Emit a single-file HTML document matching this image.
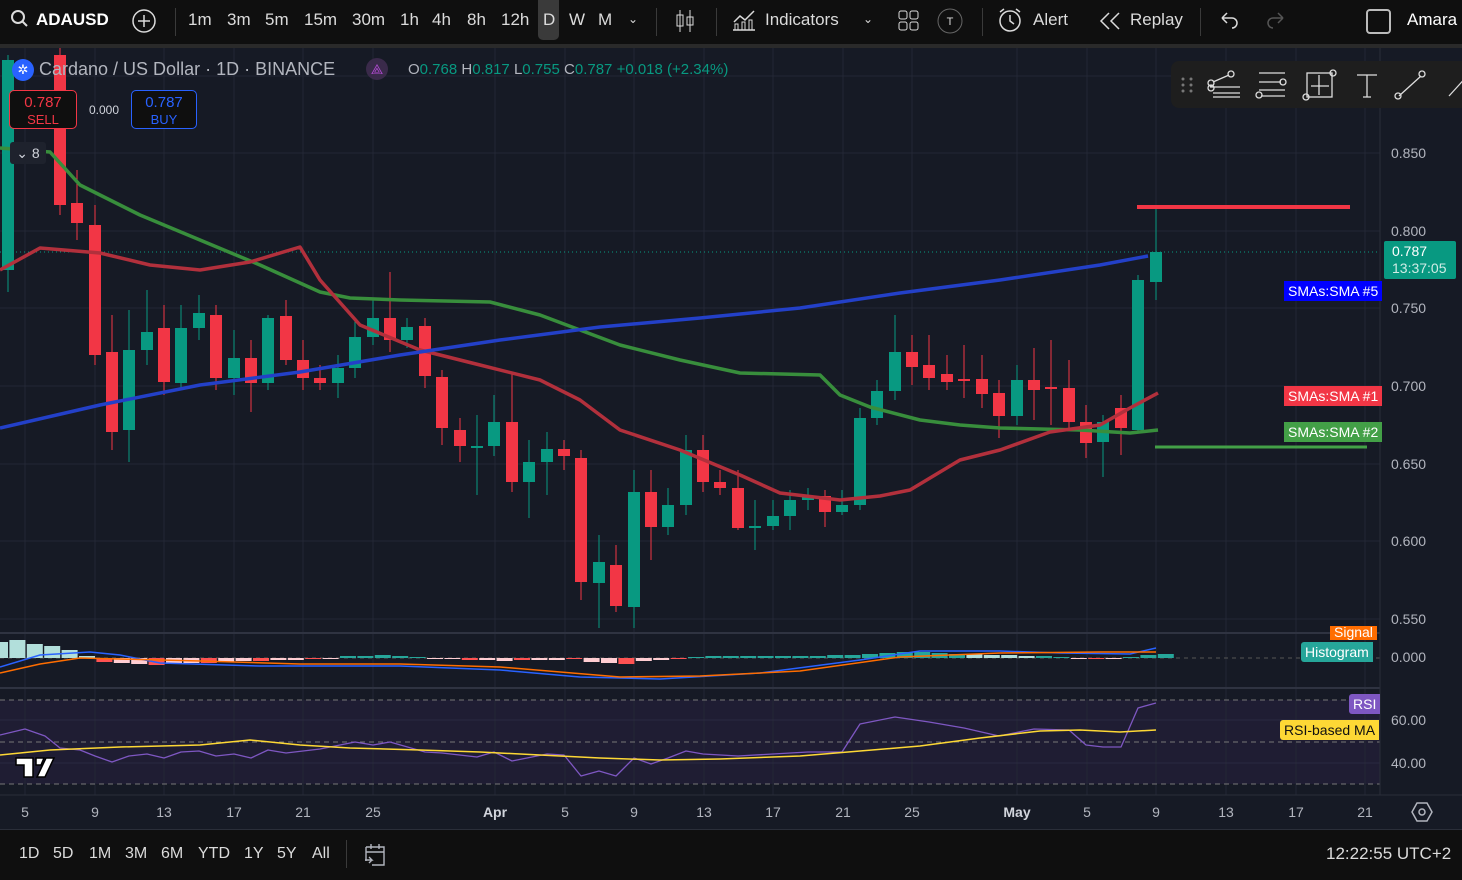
<!DOCTYPE html><html><head><meta charset="utf-8"><style>
body{margin:0;width:1462px;height:879px;overflow:hidden;background:#161a25;font-family:"Liberation Sans",sans-serif;position:relative}
.top{position:absolute;left:0;top:0;width:1462px;height:44px;background:#0f0f0f;color:#dbdbdb;font-size:17px}
.top span{position:absolute;top:10px}
.sep{position:absolute;top:0;left:0;width:1462px;height:48px;border-bottom:4px solid #2a2a2a;box-sizing:border-box;pointer-events:none}
.bot{position:absolute;left:0;top:829px;width:1462px;height:50px;background:#0f0f0f;color:#dbdbdb;font-size:16px;border-top:1px solid #2a2e39}
.bot span{position:absolute;top:15px}
.vl{position:absolute;width:1px;background:#3a3a3a}
svg{position:absolute;left:0;top:0}
.lbl{position:absolute;color:#fff;font-size:14px;padding:1px 4px;line-height:18px}
.ax{position:absolute;left:1391px;color:#b2b5be;font-size:14px}
</style></head><body>
<svg id="s" width="1462" height="879"></svg>
<div class="top">
<span style="left:10px;top:9px"><svg width="20" height="20" style="position:static"><circle cx="8" cy="8" r="6" fill="none" stroke="#dbdbdb" stroke-width="2"/><line x1="12" y1="12" x2="17" y2="17" stroke="#dbdbdb" stroke-width="2"/></svg></span>
<span style="left:36px;font-weight:bold;color:#fff">ADAUSD</span>
<span style="left:131px;top:8px"><svg width="26" height="26" style="position:static"><circle cx="13" cy="13" r="11" fill="none" stroke="#dbdbdb" stroke-width="1.5"/><path d="M13 7v12M7 13h12" stroke="#dbdbdb" stroke-width="1.5"/></svg></span>
<div class="vl" style="left:175px;top:8px;height:28px"></div>
<span style="left:188px">1m</span><span style="left:227px">3m</span><span style="left:265px">5m</span><span style="left:304px">15m</span><span style="left:352px">30m</span><span style="left:400px">1h</span><span style="left:432px">4h</span><span style="left:467px">8h</span><span style="left:501px">12h</span>
<div style="position:absolute;left:538px;top:0;width:21px;height:40px;background:#3a3a3a;border-radius:0 0 5px 5px"></div>
<span style="left:543px">D</span><span style="left:569px">W</span><span style="left:598px">M</span><span style="left:628px;font-size:12px;top:12px">&#8964;</span>
<div class="vl" style="left:656px;top:8px;height:28px"></div>
<span style="left:675px;top:8px"><svg width="20" height="26" style="position:static"><path d="M5 2v22M15 2v22" stroke="#dbdbdb"/><rect x="2" y="7" width="6" height="11" fill="none" stroke="#dbdbdb"/><rect x="12" y="9" width="6" height="8" fill="none" stroke="#dbdbdb"/></svg></span>
<div class="vl" style="left:716px;top:8px;height:28px"></div>
<span style="left:731px;top:8px"><svg width="26" height="24" style="position:static"><path d="M2 22h22M3 14l6-6 5 4 9-9" stroke="#dbdbdb" fill="none" stroke-width="1.5"/><rect x="4" y="16" width="3" height="6" fill="none" stroke="#dbdbdb"/><rect x="11" y="14" width="3" height="8" fill="none" stroke="#dbdbdb"/><rect x="18" y="12" width="3" height="10" fill="none" stroke="#dbdbdb"/></svg></span>
<span style="left:765px">Indicators</span><span style="left:863px;font-size:12px;top:12px">&#8964;</span>
<span style="left:898px;top:10px"><svg width="22" height="22" style="position:static"><rect x="1" y="1" width="8" height="8" rx="2" fill="none" stroke="#dbdbdb"/><rect x="12" y="1" width="8" height="8" rx="2" fill="none" stroke="#dbdbdb"/><rect x="1" y="12" width="8" height="8" rx="2" fill="none" stroke="#dbdbdb"/><rect x="12" y="12" width="8" height="8" rx="2" fill="none" stroke="#dbdbdb"/></svg></span>
<span style="left:936px;top:7px"><svg width="28" height="28" style="position:static"><circle cx="14" cy="14" r="12" fill="none" stroke="#666"/><text x="14" y="18" fill="#dbdbdb" font-size="11" text-anchor="middle" font-family="Liberation Sans">T</text></svg></span>
<div class="vl" style="left:982px;top:8px;height:28px"></div>
<span style="left:997px;top:7px"><svg width="28" height="28" style="position:static"><circle cx="13" cy="14" r="10" fill="none" stroke="#dbdbdb" stroke-width="1.5"/><path d="M13 8v6l4 3M3 5l4-3M23 5l-4-3" stroke="#dbdbdb" fill="none" stroke-width="1.5"/></svg></span>
<span style="left:1033px">Alert</span>
<span style="left:1099px;top:11px"><svg width="22" height="20" style="position:static"><path d="M10 2L2 10l8 8M20 2l-8 8 8 8" stroke="#dbdbdb" fill="none" stroke-width="1.5"/></svg></span>
<span style="left:1130px">Replay</span>
<div class="vl" style="left:1200px;top:8px;height:28px"></div>
<span style="left:1218px;top:10px"><svg width="22" height="20" style="position:static"><path d="M4 8h10a5 5 0 0 1 0 10M4 8l5-5M4 8l5 5" stroke="#dbdbdb" fill="none" stroke-width="1.5"/></svg></span>
<span style="left:1265px;top:10px"><svg width="22" height="20" style="position:static"><path d="M18 8H8a5 5 0 0 0 0 10M18 8l-5-5M18 8l-5 5" stroke="#555" fill="none" stroke-width="1.5"/></svg></span>
<div style="position:absolute;left:1366px;top:9px;width:21px;height:21px;border:2px solid #bbb;border-radius:4px"></div>
<span style="left:1407px;color:#fff">Amara</span>
</div>
<div class="sep"></div>
<div style="position:absolute;left:12px;top:59px;width:22px;height:22px;border-radius:50%;background:#2962ff;color:#fff;font-size:13px;text-align:center;line-height:22px">✲</div>
<div style="position:absolute;left:39px;top:59px;color:#b2b5be;font-size:18px">Cardano / US Dollar · 1D · BINANCE</div>
<div style="position:absolute;left:366px;top:58px;width:22px;height:22px;border-radius:50%;background:#3a2a4a;color:#b04ad0;text-align:center;font-size:14px;line-height:22px">⟁</div>
<div style="position:absolute;left:408px;top:61px;font-size:15px;color:#089981"><span style="color:#b2b5be">O</span>0.768 <span style="color:#b2b5be">H</span>0.817 <span style="color:#b2b5be">L</span>0.755 <span style="color:#b2b5be">C</span>0.787 +0.018 (+2.34%)</div>
<div style="position:absolute;left:9px;top:90px;width:68px;height:39px;border:1px solid #f23645;border-radius:5px;background:#0f0f0f;color:#f23645;text-align:center;font-size:15px;line-height:17px;padding-top:3px;box-sizing:border-box">0.787<br><span style="font-size:13px">SELL</span></div>
<div style="position:absolute;left:89px;top:103px;color:#d1d4dc;font-size:12px">0.000</div>
<div style="position:absolute;left:131px;top:90px;width:66px;height:39px;border:1px solid #2962ff;border-radius:5px;background:#0f0f0f;color:#2962ff;text-align:center;font-size:15px;line-height:17px;padding-top:3px;box-sizing:border-box">0.787<br><span style="font-size:13px">BUY</span></div>
<div style="position:absolute;left:10px;top:142px;width:36px;height:22px;background:#1e222d;border-radius:3px;color:#d1d4dc;font-size:14px;line-height:22px;text-align:center">&#8964; 8</div>
<div style="position:absolute;left:1171px;top:61px;width:300px;height:47px;background:#1e1e1e;border-radius:8px"></div>
<svg width="300" height="50" style="left:1171px;top:60px">
<g fill="#777"><circle cx="12" cy="19" r="1.5"/><circle cx="20" cy="19" r="1.5"/><circle cx="12" cy="25" r="1.5"/><circle cx="20" cy="25" r="1.5"/><circle cx="12" cy="31" r="1.5"/><circle cx="20" cy="31" r="1.5"/></g>
<g stroke="#ddd" fill="none" stroke-width="1.3">
<path d="M39 27h30M42 33h27M42 37h27M42 22l16-7"/><circle cx="40" cy="23" r="3"/><circle cx="40" cy="28" r="3"/><circle cx="60" cy="14" r="3"/>
<path d="M88 13h26M88 22h22M88 30h26M90 36h24"/><circle cx="112" cy="22" r="3"/><circle cx="88" cy="35" r="3"/>
<rect x="136" y="13" width="25" height="24"/><path d="M148 15v20M140 26h18"/><circle cx="162" cy="13" r="3"/><circle cx="135" cy="37" r="3"/>
<path d="M186 15h20M196 15v22M192 37h8"/>
<path d="M228 36l22-20"/><circle cx="227" cy="36" r="3"/><circle cx="251" cy="14" r="3"/>
<path d="M278 36l20-22"/>
</g></svg>
<div class="ax" style="top:145px">0.850</div><div class="ax" style="top:223px">0.800</div><div class="ax" style="top:300px">0.750</div><div class="ax" style="top:378px">0.700</div><div class="ax" style="top:456px">0.650</div><div class="ax" style="top:533px">0.600</div><div class="ax" style="top:611px">0.550</div><div class="ax" style="top:649px">0.000</div><div class="ax" style="top:712px">60.00</div><div class="ax" style="top:755px">40.00</div>
<div style="position:absolute;left:1384px;top:241px;width:72px;height:38px;background:#089981;border-radius:2px;color:#fff;font-size:14px;line-height:17px;padding:2px 0 0 8px;box-sizing:border-box">0.787<br><span style="color:#d0ece6">13:37:05</span></div>
<div class="lbl" style="left:1284px;top:281px;background:#0000ff">SMAs:SMA #5</div>
<div class="lbl" style="left:1284px;top:386px;background:#f23645">SMAs:SMA #1</div>
<div class="lbl" style="left:1284px;top:422px;background:#43a047">SMAs:SMA #2</div>
<div class="lbl" style="left:1330px;top:626px;height:12px;overflow:hidden;background:#ff6d00;line-height:10px">Signal</div>
<div class="lbl" style="left:1301px;top:642px;background:#26a69a;border-radius:3px 0 0 3px">Histogram</div>
<div class="lbl" style="left:1349px;top:694px;background:#7e57c2;border-radius:3px 0 0 3px">RSI</div>
<div class="lbl" style="left:1280px;top:720px;background:#fdd835;color:#111;border-radius:3px 0 0 3px">RSI-based MA</div>
<svg width="42" height="26" style="left:14px;top:755px"><path d="M2 3h17v19h-9V10H2z M22 3h8l-3 7h-5z M32 3h8l-9 19h-8z" fill="#fff" stroke="#000" stroke-width="1.5"/></svg>
<div style="position:absolute;left:1411px;top:801px"><svg width="22" height="22" style="position:static"><path d="M6 2h10l5 9-5 9H6l-5-9z" fill="none" stroke="#b2b5be" stroke-width="1.5"/><circle cx="11" cy="11" r="3" fill="none" stroke="#b2b5be" stroke-width="1.5"/></svg></div>
<div class="bot">
<span style="left:19px">1D</span><span style="left:53px">5D</span><span style="left:89px">1M</span><span style="left:125px">3M</span><span style="left:161px">6M</span><span style="left:198px">YTD</span><span style="left:244px">1Y</span><span style="left:277px">5Y</span><span style="left:312px">All</span>
<div class="vl" style="left:346px;top:10px;height:28px"></div>
<span style="left:363px;top:12px"><svg width="24" height="26" style="position:static"><path d="M3 5h18v18H9M3 5v14M3 10h18M8 2v5M16 2v5M2 18h7l-3-3M9 18l-3 3" fill="none" stroke="#b2b5be" stroke-width="1.4"/></svg></span>
<span style="left:1326px;font-size:17px;top:14px">12:22:55 UTC+2</span>
</div>
<script>
var s=document.getElementById('s'),h='';
function L(x1,y1,x2,y2,c,w,d){h+='<line x1="'+x1+'" y1="'+y1+'" x2="'+x2+'" y2="'+y2+'" stroke="'+c+'" stroke-width="'+(w||1)+'"'+(d?' stroke-dasharray="'+d+'"':'')+'/>';}
function P(pts,c,w){h+='<polyline fill="none" stroke="'+c+'" stroke-width="'+w+'" stroke-linejoin="round" points="'+pts+'"/>';}
h+='<rect x="0" y="48" width="1462" height="781" fill="#161a25"/>';
h+='<rect x="0" y="700" width="1380" height="84" fill="#1f1d33"/>';
var gx=[25,95,164,234,303,373,495,565,634,704,773,843,912,1017,1087,1156,1226,1296,1365];
gx.forEach(function(x){L(x,48,x,795,'#232735');});
[76,153,231,308,386,464,541,619].forEach(function(y){L(0,y,1380,y,'#232735');});
L(0,720,1380,720,'#2a2940');L(0,763,1380,763,'#2a2940');
L(0,633,1462,633,'#2f3341',2);L(0,688,1462,688,'#2f3341',2);
L(0,658,1380,658,'#555',1,'4,4');
[700,742,784].forEach(function(y){L(0,y,1380,y,'#777',1,'5,4');});
L(0,252,1380,252,'#089981',1,'1,3');
var C=[[8,60,270,55,292,1],[60,55,205,45,215,0],[77,203,223,170,240,0],[95,225,355,205,365,0],[112,352,432,315,450,0],[129,350,430,310,462,1],[147,332,350,290,365,1],[164,328,382,305,395,0],[181,328,383,305,390,1],[199,313,328,295,340,1],[216,315,378,305,390,0],[234,358,378,330,395,1],[251,358,383,340,412,0],[268,318,383,315,390,1],[286,316,360,300,365,0],[303,360,378,340,390,0],[320,378,383,365,390,0],[338,368,383,355,398,1],[355,337,368,320,378,1],[373,318,337,300,345,1],[390,318,340,272,352,0],[407,327,340,318,348,1],[425,326,376,318,388,0],[442,377,428,370,445,0],[460,430,446,418,462,0],[477,446,448,415,495,1],[494,422,446,395,456,1],[512,422,482,372,492,0],[529,462,482,440,518,1],[547,449,462,432,495,1],[564,449,456,440,470,0],[581,458,582,450,600,0],[599,562,583,535,628,1],[616,565,606,545,612,0],[634,492,607,470,628,1],[651,492,527,470,560,0],[668,505,527,488,535,1],[686,450,505,435,515,1],[703,450,482,435,492,0],[720,482,488,470,495,0],[738,488,528,470,530,0],[755,526,528,500,550,1],[773,516,526,500,530,1],[790,500,516,490,530,1],[808,496,500,488,510,1],[825,496,512,490,527,0],[842,505,512,490,515,1],[860,418,505,408,510,1],[877,391,418,380,425,1],[895,352,391,315,400,1],[912,352,367,335,385,0],[929,365,378,335,390,0],[947,374,382,355,390,0],[964,379,381,345,398,0],[982,379,394,355,408,0],[999,393,416,380,438,0],[1017,380,416,365,425,1],[1034,380,390,348,420,0],[1051,387,389,340,425,0],[1069,388,422,360,430,0],[1086,422,443,405,458,0],[1103,422,442,415,477,1],[1121,408,428,395,455,0],[1138,280,430,275,432,1],[1156,252,282,205,300,1]];
C.forEach(function(c){var col=c[5]?'#089981':'#f23645';L(c[0],c[3],c[0],c[4],col);h+='<rect x="'+(c[0]-6)+'" y="'+c[1]+'" width="12" height="'+Math.max(2,c[2]-c[1])+'" fill="'+col+'"/>';});
P('0,148 50,152 80,185 140,215 200,240 260,265 320,292 350,298 400,300 490,302 540,315 580,330 620,345 680,360 740,373 820,375 840,395 870,407 920,420 960,425 1000,428 1080,430 1130,433 1158,430','#388e3c',3.5);
P('0,270 40,248 100,253 150,265 200,270 250,262 300,247 320,280 360,325 420,350 480,365 540,380 580,400 620,430 680,450 740,475 780,493 840,500 880,496 910,490 960,460 1000,450 1050,432 1100,425 1130,408 1158,393','#b2303c',3.5);
P('0,428 100,405 200,385 300,372 400,355 500,340 600,327 700,318 800,308 900,293 1000,280 1100,265 1148,256','#2340c8',3.5);
L(1137,207,1350,207,'#f23645',4);L(1155,447,1367,447,'#43a047',3);
var hv=[16,18,14,12,8,2,-4,-5,-6,-7,-6,-5,-5,-4,-3,-3,-2,-2,-1,-1,2,2,3,2,1,-1,-1,-2,-2,-3,-2,-2,-2,-1,-4,-5,-6,-3,-2,-1,1,2,2,2,2,2,2,2,3,3,4,5,6,6,5,4,4,3,3,2,2,1,-1,-1,-1,1,3,4];
hv.forEach(function(v,i){var x=i*17.4-8;var col=v>0?(i<6||i>55&&i<60?'#b2dfdb':'#26a69a'):(i%3?'#ffcdd2':'#ff5252');h+='<rect x="'+x+'" y="'+(v>0?658-v:658)+'" width="16" height="'+Math.abs(v)+'" fill="'+col+'"/>';});
P('0,667 40,655 90,652 120,655 160,663 260,666 400,666 500,670 580,677 660,679 760,673 860,660 920,651 1000,651 1060,653 1130,654 1156,648','#2962ff',1.5);
P('0,673 40,664 80,658 120,659 200,661 300,664 400,664 500,667 620,677 700,676 800,671 900,657 1000,653 1100,652 1156,652','#ff6d00',1.5);
P('0,735 25,729 45,736 60,748 80,750 95,756 112,762 129,756 147,754 164,758 181,752 199,751 216,756 234,754 251,758 268,750 286,753 320,749 355,742 373,745 390,742 425,752 442,753 477,757 494,752 512,761 547,754 564,755 581,776 599,771 616,776 634,758 651,764 668,758 686,751 703,754 738,756 773,754 808,752 842,752 860,724 895,717 929,722 964,728 999,736 1034,729 1069,730 1086,745 1103,747 1121,747 1138,708 1156,703','#7e57c2',1.3);
P('0,755 50,750 120,747 200,745 250,740 300,745 350,748 420,750 480,752 540,755 600,758 660,760 720,759 800,756 860,751 920,746 980,738 1040,731 1080,730 1120,732 1156,730','#fdd835',1.5);
h+='<rect x="1380" y="48" width="82" height="781" fill="#161a25"/>';L(1380,48,1380,795,'#2a2e39');
L(0,795,1462,795,'#2a2e39');
var tl=['5','9','13','17','21','25','Apr','5','9','13','17','21','25','May','5','9','13','17','21'];
gx.forEach(function(x,i){h+='<text x="'+x+'" y="817" fill="'+(tl[i].length>2?'#d1d4dc':'#b2b5be')+'" font-size="14" font-weight="'+(tl[i].length>2?'bold':'normal')+'" text-anchor="middle" font-family="Liberation Sans">'+tl[i]+'</text>';});
s.innerHTML=h;
</script>
</body></html>
